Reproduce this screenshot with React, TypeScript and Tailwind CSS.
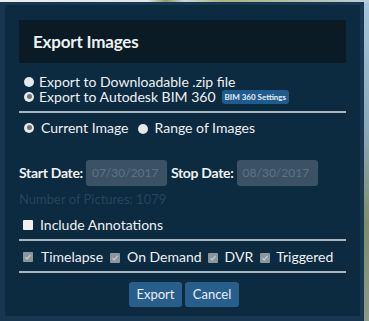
import React from "react";

function Radio({ checked }: { checked?: boolean }) {
  return (
    <span className="relative inline-block w-[10px] h-[10px] rounded-full bg-[#e6e9ec] shrink-0">
      {checked && <span className="absolute left-[2.5px] top-[2.5px] w-[5px] h-[5px] rounded-full bg-[#6b737a]" />}
    </span>
  );
}

function GreyCheck() {
  return (
    <span className="inline-flex items-center justify-center w-[10px] h-[10px] rounded-[1px] bg-[#8b979f] shrink-0">
      <svg width="8" height="8" viewBox="0 0 8 8">
        <path d="M1.5 4.2 L3.2 5.8 L6.5 2" stroke="#c4cbd0" strokeWidth="1.2" fill="none" />
      </svg>
    </span>
  );
}

export default function App() {
  return (
    <div
      className="relative w-[369px] h-[321px] overflow-hidden bg-[#6f8fa0]"
      style={{ fontFamily: "Lato, 'Open Sans', sans-serif" }}
    >
      <div className="absolute inset-0 bg-[linear-gradient(180deg,#a9c6dc_0%,#8aa8b8_40%,#7e8c6a_70%,#8a9a88_100%)]" />
      <div className="absolute left-0 top-0 w-[369px] h-[3px] bg-[linear-gradient(90deg,#e8eef2_0%,#dfe6ea_40%,#8a9a6a_45%,#c9d6de_50%,#a7b67a_60%,#b8cdd9_100%)]" />
      <div className="relative mt-[2px] w-[364px] h-[319px] bg-[#18364f] pl-[5px] pt-[3px]">
        <div className="w-[355px] h-[311px] bg-[#0c2a40] flex flex-col px-[14px] pt-[15px] text-[#eef1f3]">
          <div className="h-[43px] bg-[#0a1b26] flex items-center pl-[14px] rounded-[1px]">
            <span className="text-[17px] font-bold tracking-[-0.2px] leading-none">Export Images</span>
          </div>

          <div className="mt-[11px] flex items-center gap-[5px] pl-[5px] h-[15px]">
            <Radio />
            <span className="text-[14px] leading-[15px]">Export to Downloadable .zip file</span>
          </div>
          <div className="flex items-center gap-[5px] pl-[5px] h-[15px]">
            <Radio checked />
            <span className="text-[14px] leading-[15px]">Export to Autodesk BIM 360</span>
            <span className="ml-[1px] h-[14px] px-[3px] rounded-[3px] bg-[#1f5b8c] text-[8px] font-bold leading-[14px] text-[#e4edf4]">
              BIM 360 Settings
            </span>
          </div>

          <div className="mt-[7px] h-[2px] bg-[#aab7c0]" />

          <div className="mt-[7px] flex items-center pl-[5px] h-[15px]">
            <Radio checked />
            <span className="ml-[7px] text-[14px] leading-[15px]">Current Image</span>
            <span className="ml-[9px]"><Radio /></span>
            <span className="ml-[7px] text-[14px] leading-[15px]">Range of Images</span>
          </div>

          <div className="mt-[25px] flex items-center h-[26px]">
            <span className="text-[14px] font-bold leading-none tracking-[-0.3px]">Start Date:</span>
            <div className="ml-[3px] w-[81px] h-[26px] rounded-[3px] bg-[#3b5264] flex items-center pl-[6px] text-[12px] text-[#5c7385]">
              07/30/2017
            </div>
            <span className="ml-[4px] text-[14px] font-bold leading-none tracking-[-0.3px]">Stop Date:</span>
            <div className="ml-[3px] w-[81px] h-[26px] rounded-[3px] bg-[#3b5264] flex items-center pl-[6px] text-[12px] text-[#5c7385]">
              08/30/2017
            </div>
          </div>

          <div className="mt-[5px] text-[13px] leading-[16px] text-[#25465d]">Number of Pictures: 1079</div>

          <div className="mt-[11px] flex items-center pl-[4px] h-[14px]">
            <span className="w-[10px] h-[10px] bg-[#eef0f2] rounded-[1px]" />
            <span className="ml-[7px] text-[14px] leading-none">Include Annotations</span>
          </div>

          <div className="mt-[7px] h-[2px] bg-[#aab7c0]" />

          <div className="mt-[8px] flex items-center pl-[4px] h-[15px] text-[14px] leading-none">
            <GreyCheck />
            <span className="ml-[8px]">Timelapse</span>
            <span className="ml-[7px]"><GreyCheck /></span>
            <span className="ml-[7px]">On Demand</span>
            <span className="ml-[6px]"><GreyCheck /></span>
            <span className="ml-[7px]">DVR</span>
            <span className="ml-[7px]"><GreyCheck /></span>
            <span className="ml-[6px]">Triggered</span>
          </div>

          <div className="mt-[7px] h-[2px] bg-[#aab7c0]" />

          <div className="mt-[9px] flex justify-center gap-[3px] pl-[3px]">
            <button className="w-[53px] h-[25px] rounded-[3px] bg-[#285e8c] text-[13px] text-[#e8eff5] leading-none">
              Export
            </button>
            <button className="w-[54px] h-[25px] rounded-[3px] bg-[#285e8c] text-[13px] text-[#e8eff5] leading-none">
              Cancel
            </button>
          </div>
        </div>
      </div>
    </div>
  );
}
